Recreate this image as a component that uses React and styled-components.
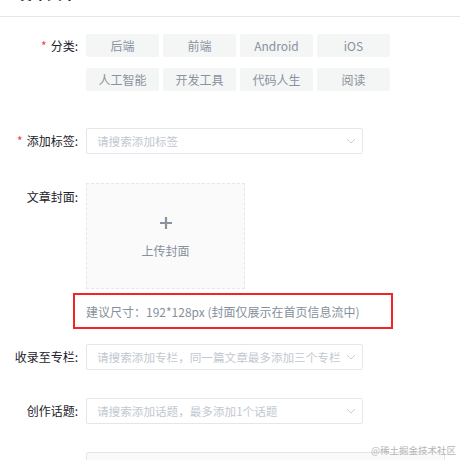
import React from 'react';
import styled, { createGlobalStyle } from 'styled-components';

const GlobalStyle = createGlobalStyle`
  html, body {
    margin: 0;
    padding: 0;
    background: #fff;
    overflow: hidden;
  }
  body {
    font-family: "Noto Sans CJK SC", "Noto Sans", "Liberation Sans", sans-serif;
    color: #252933;
  }
`;

const Page = styled.div`
  position: relative;
  width: 460px;
  height: 460px;
  overflow: hidden;
`;

const Header = styled.div`
  height: 16px;
  display: flex;
  align-items: flex-end;
  padding-left: 17px;
  border-bottom: 1px solid #e6e7ee;
  overflow: hidden;
`;

const Title = styled.div`
  font-size: 15px;
  font-weight: 600;
  line-height: 15px;
  margin-bottom: 16px;
  color: #1d2129;
`;

const Form = styled.div`
  padding-top: 17px;
`;

const Row = styled.div`
  display: flex;
  align-items: flex-start;
  margin-bottom: ${(p) => p.$gap || 0}px;
`;

const Label = styled.div`
  flex: 0 0 86px;
  width: 86px;
  padding-right: 8px;
  box-sizing: border-box;
  text-align: right;
  font-size: 12px;
  line-height: ${(p) => p.$lh || 26}px;
  color: #1d2129;
  white-space: nowrap;
`;

const Required = styled.span`
  color: #f53f3f;
  margin-right: 4px;
  font-size: 12px;
`;

const Content = styled.div`
  flex: 0 0 auto;
`;

const TagGrid = styled.div`
  display: grid;
  grid-template-columns: repeat(4, 73px);
  column-gap: 4px;
  row-gap: 11px;
`;

const Tag = styled.div`
  height: 23px;
  line-height: 23px;
  background: #f4f5f5;
  border-radius: 2px;
  text-align: center;
  font-size: 12px;
  color: #8a919f;
`;

const Select = styled.div`
  width: ${(p) => p.$width || 277}px;
  height: ${(p) => p.$height || 26}px;
  box-sizing: border-box;
  border: 1px solid #e5e6eb;
  border-radius: 2px;
  background: ${(p) => p.$bg || '#fff'};
  display: flex;
  align-items: center;
  padding: 0 6px 0 10px;
  font-size: 11.6px;
  color: #c2c8d1;
`;

const Placeholder = styled.span`
  flex: 1;
  min-width: 0;
  white-space: nowrap;
  overflow: hidden;
`;

const Chevron = () => (
  <svg width="10" height="6" viewBox="0 0 10 6" fill="none">
    <path d="M1 1l4 4 4-4" stroke="#c9cdd4" strokeWidth="1" />
  </svg>
);

const Upload = styled.div`
  width: 159px;
  height: 106px;
  box-sizing: border-box;
  border: 1px dashed #e5e6eb;
  background: #fafafa;
  display: flex;
  flex-direction: column;
  align-items: center;
  padding-top: 33px;
`;

const UploadText = styled.div`
  margin-top: 13px;
  font-size: 12px;
  color: #86909c;
`;

const PlusIcon = () => (
  <svg width="12" height="12" viewBox="0 0 12 12">
    <path d="M6 0v12M0 6h12" stroke="#8a919f" strokeWidth="2.2" />
  </svg>
);

const HintBox = styled.div`
  margin-left: -13px;
  width: 320px;
  height: 36px;
  box-sizing: border-box;
  border: 2px solid #f2242a;
  padding-left: 11px;
  display: flex;
  align-items: center;
  font-size: 12px;
  color: #86909c;
  white-space: nowrap;
`;

const Watermark = styled.div`
  position: absolute;
  right: 4px;
  bottom: 3px;
  font-size: 9.5px;
  color: #b4b4b4;
  font-family: "Noto Sans CJK SC", sans-serif;
`;

const categories = ['后端', '前端', 'Android', 'iOS', '人工智能', '开发工具', '代码人生', '阅读'];

export default function App() {
  return (
    <Page>
      <GlobalStyle />
      <Header>
        <Title>发布文章</Title>
      </Header>
      <Form>
        <Row $gap={37}>
          <Label $lh={23}>
            <Required>*</Required>分类:
          </Label>
          <Content>
            <TagGrid>
              {categories.map((c) => (
                <Tag key={c}>{c}</Tag>
              ))}
            </TagGrid>
          </Content>
        </Row>
        <Row $gap={29}>
          <Label>
            <Required>*</Required>添加标签:
          </Label>
          <Content>
            <Select>
              <Placeholder>请搜索添加标签</Placeholder>
              <Chevron />
            </Select>
          </Content>
        </Row>
        <Row $gap={4}>
          <Label $lh={28}>文章封面:</Label>
          <Content>
            <Upload>
              <PlusIcon />
              <UploadText>上传封面</UploadText>
            </Upload>
          </Content>
        </Row>
        <Row $gap={15}>
          <Label />
          <Content>
            <HintBox>建议尺寸：192*128px (封面仅展示在首页信息流中)</HintBox>
          </Content>
        </Row>
        <Row $gap={28}>
          <Label>收录至专栏:</Label>
          <Content>
            <Select>
              <Placeholder>请搜索添加专栏，同一篇文章最多添加三个专栏</Placeholder>
              <Chevron />
            </Select>
          </Content>
        </Row>
        <Row $gap={28}>
          <Label>创作话题:</Label>
          <Content>
            <Select>
              <Placeholder>请搜索添加话题，最多添加1个话题</Placeholder>
              <Chevron />
            </Select>
          </Content>
        </Row>
        <Row>
          <Label $lh={38}>
            <Required>*</Required>编辑摘要:
          </Label>
          <Content>
            <Select $width={359} $height={80} $bg="#fafafa" />
          </Content>
        </Row>
      </Form>
      <Watermark>@稀土掘金技术社区</Watermark>
    </Page>
  );
}
